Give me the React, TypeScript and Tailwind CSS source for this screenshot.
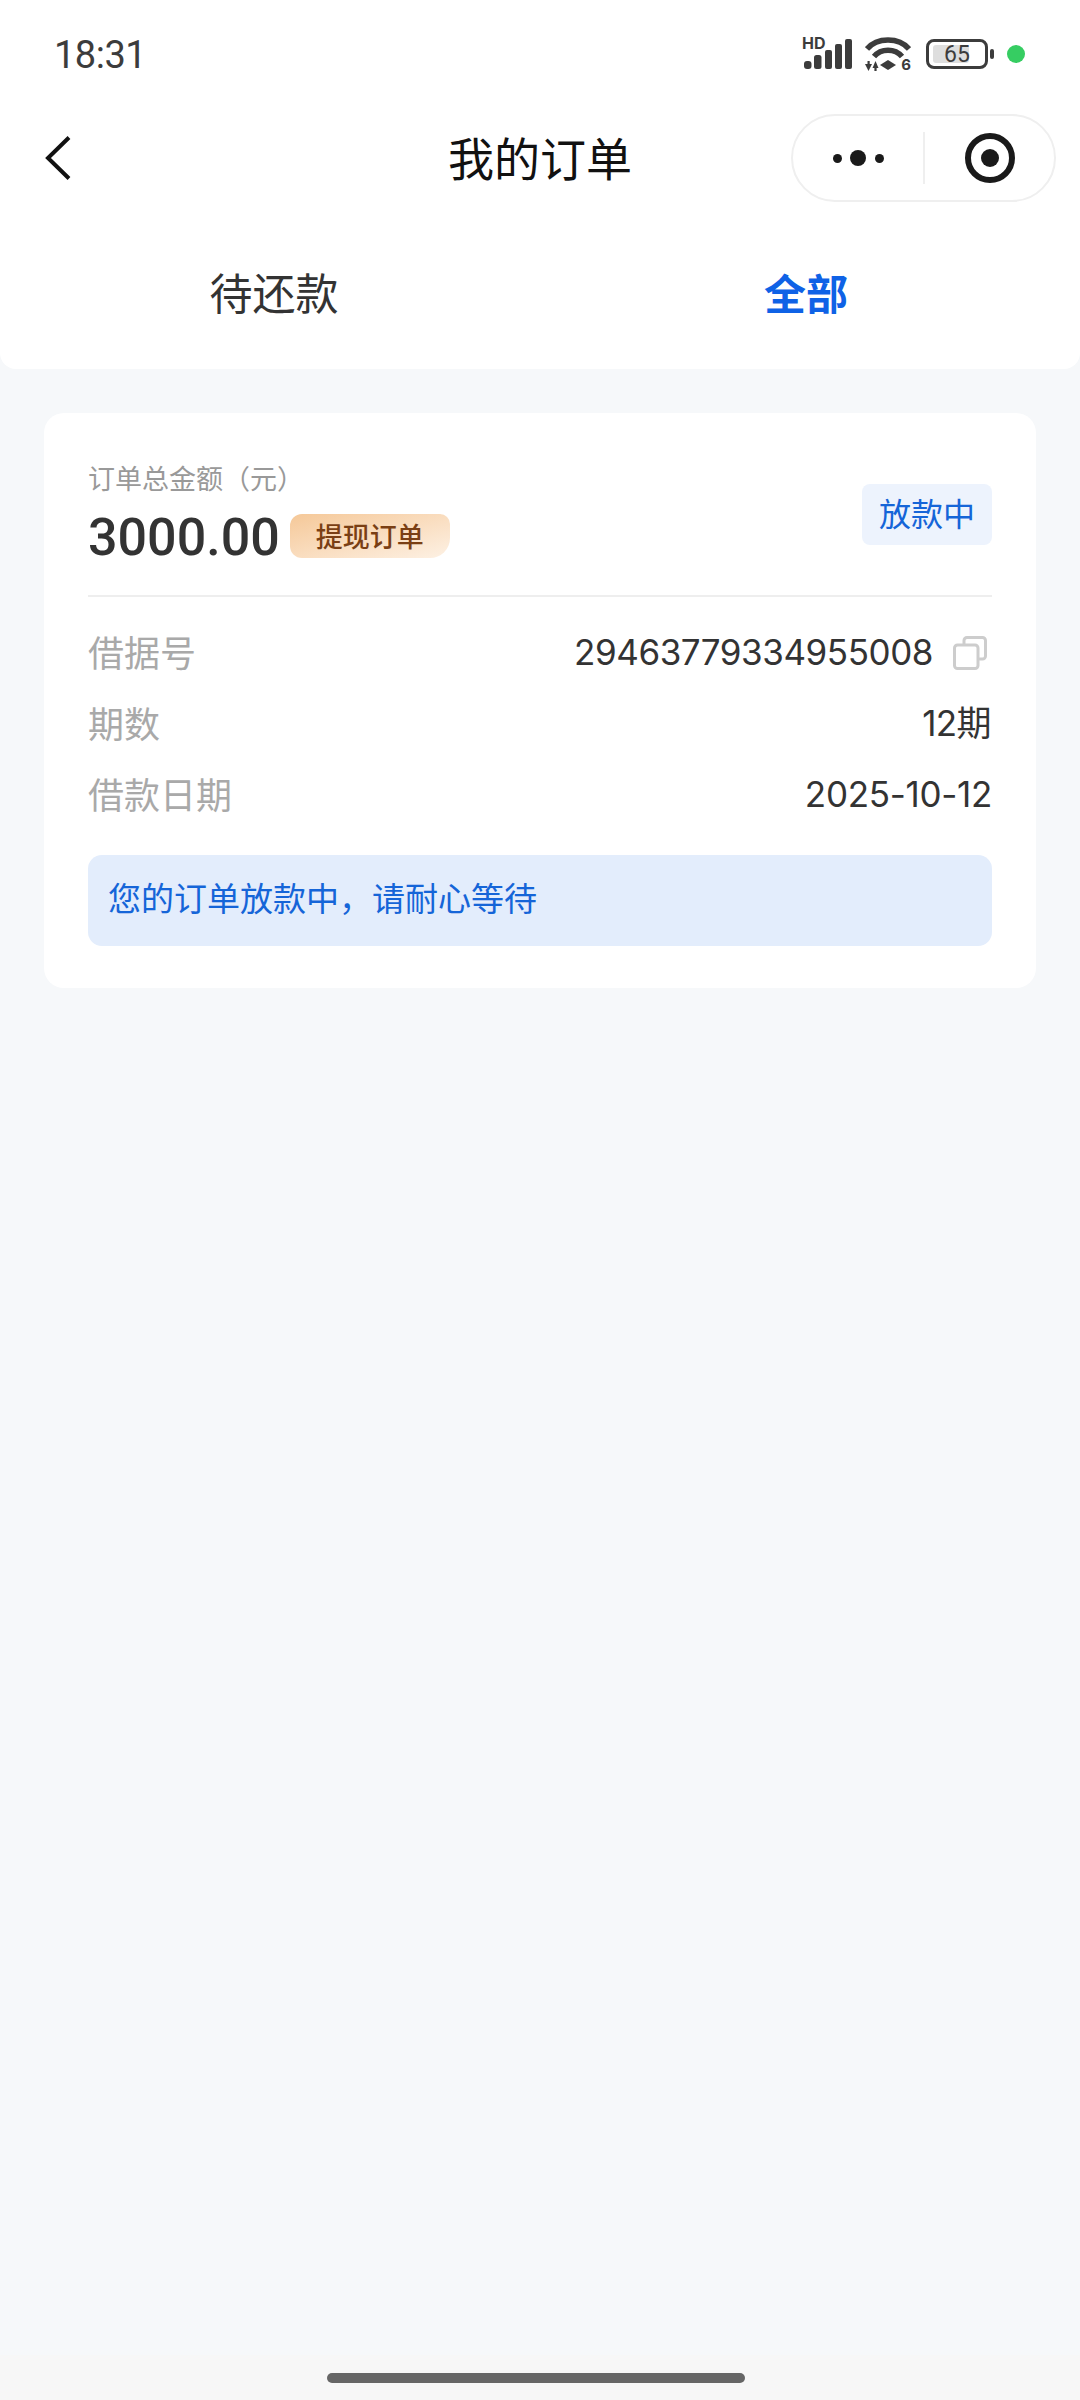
const CN = { fontFamily: '"Noto Sans CJK SC", sans-serif' };

function Signal() {
  return (
    <div className="relative w-[50px] h-[32px]">
      <span className="absolute left-0 top-[-3px] text-[16px] leading-[16px] font-bold text-[#3c3c3c] font-['Inter']">HD</span>
      <svg width="50" height="32" viewBox="0 0 50 32" fill="#3c3c3c" className="absolute left-0 top-0">
        <rect x="2" y="23" width="7.5" height="8" rx="3" />
        <rect x="12" y="17" width="7.5" height="14" rx="2.5" />
        <rect x="23" y="12" width="7" height="19" rx="2" />
        <rect x="33" y="6" width="7" height="25" rx="2" />
        <rect x="43" y="1" width="7" height="30" rx="2" />
      </svg>
    </div>
  );
}

function Wifi() {
  return (
    <div className="relative w-[46px] h-[34px]">
      <svg width="46" height="34" viewBox="0 0 46 34" fill="none" className="absolute left-0 top-0">
        <path d="M2 12 C12 0 34 0 44 12" stroke="#3c3c3c" strokeWidth="5.5" />
        <path d="M9 19.5 C16 11 30 11 37 19.5" stroke="#3c3c3c" strokeWidth="5.5" />
        <path d="M23 23 L31 28 L23 33 L15 28 Z" fill="#3c3c3c" />
        <path d="M0 27 H7 L3.5 34 Z" fill="#3c3c3c" />
        <rect x="2.5" y="24" width="2.2" height="5" fill="#3c3c3c" />
        <path d="M7.5 31 H13.5 L10.5 24 Z" fill="#3c3c3c" />
        <rect x="9.4" y="29" width="2.2" height="5" fill="#3c3c3c" />
      </svg>
      <span className="absolute right-0 bottom-[-1px] text-[15px] leading-[15px] font-bold text-[#3c3c3c] font-['Inter']">6</span>
    </div>
  );
}

function Battery() {
  return (
    <div className="flex items-center gap-[2px]">
      <div className="relative w-[62px] h-[30px] border-[3px] border-[#3c3c3c] rounded-[8px] flex items-center justify-center">
        <div className="absolute left-[4px] top-[3px] bottom-[3px] w-[36px] bg-[#dedede] rounded-[3px]" />
        <span className="relative text-[23px] leading-none text-[#3c3c3c] font-['Roboto']">65</span>
      </div>
      <div className="w-[4px] h-[10px] bg-[#3c3c3c] rounded-[2px]" />
    </div>
  );
}

function CopyIcon() {
  return (
    <svg width="34" height="34" viewBox="0 0 34 34" fill="none" stroke="#cdcdcd" strokeWidth="3">
      <path d="M11 8 V4.5 A3 3 0 0 1 14 1.5 H29.5 A3 3 0 0 1 32.5 4.5 V20 A3 3 0 0 1 29.5 23 H25" />
      <rect x="1.5" y="9" width="23.5" height="23.5" rx="3" />
    </svg>
  );
}

function Row({ label, children }: { label: string; children: React.ReactNode }) {
  return (
    <div className="flex items-center justify-between h-[71px]">
      <span className="text-[36px] leading-none text-[#a9a9a9] pb-[3px]" style={CN}>{label}</span>
      {children}
    </div>
  );
}

export default function App() {
  return (
    <div className="w-[1080px] h-[2400px] flex flex-col bg-[#f6f8fa] overflow-hidden" style={CN}>
      <header className="bg-white rounded-b-[16px] h-[369px] flex flex-col shrink-0">
        <div className="h-[108px] flex items-center pl-[54px] pr-[55px] justify-between">
          <span className="text-[38px] leading-none text-[#3c3c3c] font-['Roboto'] tracking-[-0.5px] pt-[1px]">18:31</span>
          <div className="flex items-center">
            <Signal />
            <div className="ml-[13px]"><Wifi /></div>
            <div className="ml-[15px]"><Battery /></div>
            <div className="ml-[13px] w-[18px] h-[18px] rounded-full bg-[#36cd62]" />
          </div>
        </div>
        <div className="h-[100px] grid grid-cols-[1fr_auto_1fr] items-center">
          <div className="pl-[45px]">
            <svg width="26" height="44" viewBox="0 0 26 44" fill="none" stroke="#111" strokeWidth="4">
              <path d="M24 1.5 L3 22 L24 42.5" />
            </svg>
          </div>
          <h1 className="text-[46px] leading-none font-normal text-[#111] pb-[5px]">我的订单</h1>
          <div className="flex justify-end pr-[24px]">
            <div className="w-[265px] h-[88px] rounded-full border-2 border-[#efefef] flex items-center">
              <div className="w-[130px] flex items-center justify-center gap-[8.5px]">
                <span className="w-[9px] h-[9px] rounded-full bg-[#1a1a1a]" />
                <span className="w-[16px] h-[16px] rounded-full bg-[#1a1a1a]" />
                <span className="w-[9px] h-[9px] rounded-full bg-[#1a1a1a]" />
              </div>
              <div className="w-[2px] h-[52px] bg-[#efefef]" />
              <div className="flex-1 flex items-center justify-center">
                <div className="w-[50px] h-[50px] rounded-full border-[6px] border-[#1a1a1a] flex items-center justify-center">
                  <span className="w-[18px] h-[18px] rounded-full bg-[#1a1a1a]" />
                </div>
              </div>
            </div>
          </div>
        </div>
        <div className="flex-1 grid grid-cols-2 px-[8px] pt-[6px] items-center text-center">
          <span className="text-[43px] leading-none text-[#333]">待还款</span>
          <span className="text-[42px] leading-none font-bold text-[#0f62e6]">全部</span>
        </div>
      </header>

      <main className="flex-1 px-[44px] pt-[44px]">
        <section className="bg-white rounded-[20px] px-[44px] pt-[51px] pb-[42px]">
          <div className="flex justify-between items-start h-[133px] border-b-2 border-[#eeeeee]">
            <div>
              <p className="text-[27px] leading-[28px] text-[#999]">订单总金额（元）</p>
              <div className="flex items-center mt-[18px]">
                <span className="text-[52px] leading-[56px] font-medium text-[#333] font-['Roboto']">3000.00</span>
                <span className="ml-[10px] mb-[4px] w-[160px] h-[44px] rounded-[12px] rounded-br-[20px] rounded-tr-[10px] bg-gradient-to-br from-[#f5c898] to-[#fdf1e4] flex items-center justify-center text-[27px] leading-none font-medium text-[#7a3f14] pb-[2px]">提现订单</span>
              </div>
            </div>
            <span className="mt-[20px] w-[130px] h-[61px] rounded-[8px] bg-[#edf3fd] flex items-center justify-center text-[32px] leading-none text-[#1565d8] pb-[5px]">放款中</span>
          </div>
          <div className="mt-[20px]">
            <Row label="借据号">
              <div className="flex items-center">
                <span className="text-[35px] leading-none text-[#333] font-['Inter'] tracking-[-0.45px]">29463779334955008</span>
                <span className="ml-[20px] mr-[5px]"><CopyIcon /></span>
              </div>
            </Row>
            <Row label="期数">
              <span className="text-[35px] leading-none text-[#333] tracking-[-0.6px] pr-[1px]" style={{ fontFamily: 'Inter, "Noto Sans CJK SC", sans-serif' }}>12期</span>
            </Row>
            <Row label="借款日期">
              <span className="text-[35px] leading-none text-[#333] font-['Inter'] tracking-[-0.3px]">2025-10-12</span>
            </Row>
          </div>
          <div className="mt-[25px] h-[91px] rounded-[14px] bg-[#e3edfc] flex items-center pl-[20px] pb-[6px] text-[33px] leading-none text-[#1565d8]">您的订单放款中，请耐心等待</div>
        </section>
      </main>

      <footer className="h-[45px] shrink-0 flex justify-center pt-[18px] bg-[#f7f7f7] pr-[8px]">
        <div className="w-[418px] h-[10px] rounded-full bg-[#666]" />
      </footer>
    </div>
  );
}
